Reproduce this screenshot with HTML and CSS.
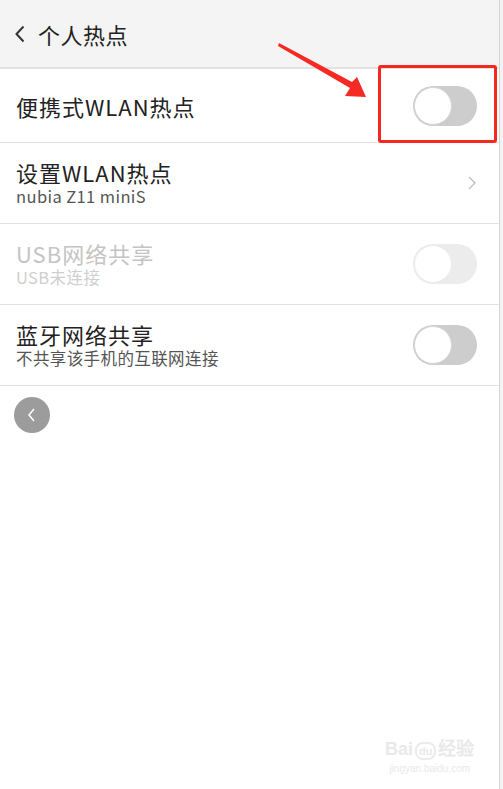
FILE: index.html
```html
<!DOCTYPE html>
<html lang="zh-CN">
<head>
	<meta charset="UTF-8">
	<title>个人热点</title>
	<link rel="stylesheet" href="styles.css">
</head>
<body>
	<div class="shot">
		<div class="screen">
			<div class="top">
				<svg class="back" width="12" height="18" viewBox="0 0 12 18"><path d="M9.5 1.5 L2.5 9 L9.5 16.5" fill="none" stroke="#333" stroke-width="2"/></svg>
				<span class="top-title">个人热点</span>
			</div>

			<div class="row row-first">
				<div class="txt">
					<div class="title">便携式WLAN热点</div>
				</div>
				<span class="switch"><span class="knob"></span></span>
			</div>

			<div class="row">
				<div class="txt">
					<div class="title">设置WLAN热点</div>
					<div class="sub">nubia Z11 miniS</div>
				</div>
				<svg class="arrow-r" width="8" height="14" viewBox="0 0 8 14"><path d="M1 1 L7 7 L1 13" fill="none" stroke="#bdbdbd" stroke-width="1.3"/></svg>
			</div>

			<div class="row off">
				<div class="txt">
					<div class="title">USB网络共享</div>
					<div class="sub">USB未连接</div>
				</div>
				<span class="switch"><span class="knob"></span></span>
			</div>

			<div class="row">
				<div class="txt">
					<div class="title">蓝牙网络共享</div>
					<div class="sub">不共享该手机的互联网连接</div>
				</div>
				<span class="switch"><span class="knob"></span></span>
			</div>

			<div class="round-back">
				<svg width="12" height="18" viewBox="0 0 12 18"><path d="M8 3 L3 9 L8 15" fill="none" stroke="#fff" stroke-width="1.5"/></svg>
			</div>

			<div class="mark">
				<div class="mark-logo">Bai<span class="paw">du</span>经验</div>
				<div class="mark-url">jingyan.baidu.com</div>
			</div>
		</div>
		<div class="edge"></div>

		<!-- 标注 -->
		<div class="hl-box"></div>
		<svg class="hl-arrow" width="503" height="120" viewBox="0 0 503 120">
			<polygon points="279,43 352,82 357,77 366,97 345,96 350,88 278,46" fill="#f52a22"/>
		</svg>
	</div>
</body>
</html>
```

FILE: styles.css
```css
body {
	margin: 0;
	background: #fff;
	font-family: "Noto Sans CJK SC", "Noto Sans", sans-serif;
}
.shot {
	position: relative;
	display: flex;
	width: 503px;
	height: 789px;
	overflow: hidden;
}
.screen {
	position: relative;
	width: 499px;
	border-right: 1px solid #d4d4d4;
	background: #fff;
}
.edge {
	flex: 1;
	background: #f3f3f3;
}
.top {
	display: flex;
	align-items: center;
	gap: 12px;
	height: 67px;
	padding-left: 14px;
	background: #f4f4f4;
	border-bottom: 2px solid #e2e2e2;
}
.top-title {
	font-size: 22px;
	color: #222;
	letter-spacing: 0.5px;
}
.row {
	display: flex;
	align-items: center;
	height: 80px;
	padding: 0 22px 0 16px;
	border-bottom: 1px solid #e2e2e2;
}
.row-first {
	height: 73px;
}
.txt {
	flex: 1;
}
.title {
	font-size: 22px;
	line-height: 26px;
	letter-spacing: 1px;
	color: #222;
}
.sub {
	font-size: 16.5px;
	line-height: 22px;
	letter-spacing: 0.4px;
	color: #555;
}
.off .title {
	color: #c4c4c4;
}
.off .sub {
	color: #cfcfcf;
}
.arrow-r {
	margin-right: 1px;
}
.switch {
	display: flex;
	align-items: center;
	width: 64px;
	height: 40px;
	padding: 0 1px;
	box-sizing: border-box;
	border-radius: 20px;
	background: #cdcdcd;
}
.knob {
	width: 38px;
	height: 38px;
	box-sizing: border-box;
	border-radius: 50%;
	background: #fff;
	border: 1px solid #d6d6d6;
}
.off .switch {
	background: #ececec;
}
.off .knob {
	border-color: #ececec;
}
.round-back {
	display: flex;
	align-items: center;
	justify-content: center;
	width: 36px;
	height: 36px;
	margin: 11px 0 0 14px;
	border-radius: 50%;
	background: #9c9c9c;
}
.mark {
	position: absolute;
	left: 385px;
	top: 736px;
	color: #e9e9e9;
	text-align: center;
}
.mark-logo {
	font-family: "Liberation Sans", sans-serif;
	font-size: 18px;
	font-weight: bold;
	line-height: 26px;
}
.paw {
	display: inline-block;
	margin: 0 2px;
	padding: 0 2px;
	font-size: 11px;
	line-height: 14px;
	border: 2px solid #ebebeb;
	border-radius: 8px;
}
.mark-url {
	font-family: "Liberation Sans", sans-serif;
	font-size: 10px;
	line-height: 14px;
}
.hl-box {
	position: absolute;
	left: 378px;
	top: 65px;
	width: 113px;
	height: 72px;
	border: 3px solid #f5281f;
	border-radius: 3px;
}
.hl-arrow {
	position: absolute;
	left: 0;
	top: 0;
}
```
